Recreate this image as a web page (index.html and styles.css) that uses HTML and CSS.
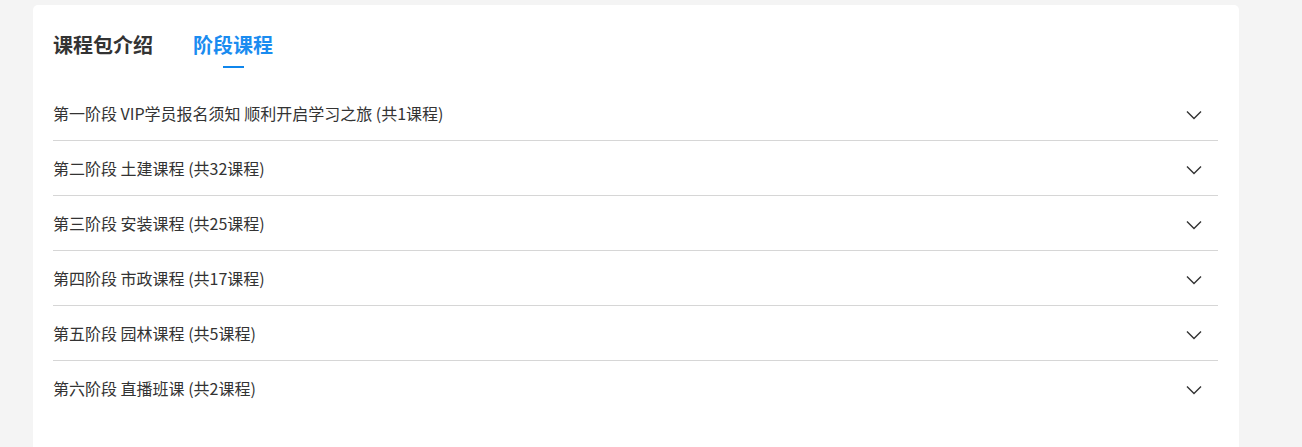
FILE: index.html
```html
<!DOCTYPE html>
<html lang="zh-CN">
<head>
<meta charset="utf-8">
<title>阶段课程</title>
<link rel="stylesheet" href="styles.css">
</head>
<body>
<div class="card">
  <div class="tabs">
    <div class="tab">课程包介绍</div>
    <div class="tab active">阶段课程</div>
  </div>
  <ul class="stages">
    <li class="stage"><span class="stage-title">第一阶段 VIP学员报名须知 顺利开启学习之旅 (共1课程)</span><svg class="chev" viewBox="0 0 16 10" width="16" height="10"><path d="M1 1.5 L8 8.5 L15 1.5" fill="none" stroke="#333" stroke-width="1.4"/></svg></li>
    <li class="stage"><span class="stage-title">第二阶段 土建课程 (共32课程)</span><svg class="chev" viewBox="0 0 16 10" width="16" height="10"><path d="M1 1.5 L8 8.5 L15 1.5" fill="none" stroke="#333" stroke-width="1.4"/></svg></li>
    <li class="stage"><span class="stage-title">第三阶段 安装课程 (共25课程)</span><svg class="chev" viewBox="0 0 16 10" width="16" height="10"><path d="M1 1.5 L8 8.5 L15 1.5" fill="none" stroke="#333" stroke-width="1.4"/></svg></li>
    <li class="stage"><span class="stage-title">第四阶段 市政课程 (共17课程)</span><svg class="chev" viewBox="0 0 16 10" width="16" height="10"><path d="M1 1.5 L8 8.5 L15 1.5" fill="none" stroke="#333" stroke-width="1.4"/></svg></li>
    <li class="stage"><span class="stage-title">第五阶段 园林课程 (共5课程)</span><svg class="chev" viewBox="0 0 16 10" width="16" height="10"><path d="M1 1.5 L8 8.5 L15 1.5" fill="none" stroke="#333" stroke-width="1.4"/></svg></li>
    <li class="stage"><span class="stage-title">第六阶段 直播班课 (共2课程)</span><svg class="chev" viewBox="0 0 16 10" width="16" height="10"><path d="M1 1.5 L8 8.5 L15 1.5" fill="none" stroke="#333" stroke-width="1.4"/></svg></li>
  </ul>
</div>
</body>
</html>
```

FILE: styles.css
```css
html, body {
  margin: 0;
  padding: 0;
  background: #f4f4f4;
  height: 100%;
}
body {
  padding: 5px 0 0 33px;
  box-sizing: border-box;
  font-family: "Noto Sans CJK SC", "Noto Sans", sans-serif;
  color: #333;
  overflow: hidden;
}
.card {
  width: 1206px;
  min-height: 460px;
  background: #fff;
  border-radius: 5px;
  padding: 25px 21px 0 20px;
  box-sizing: border-box;
}
.tabs {
  display: flex;
  gap: 40px;
  height: 56px;
}
.tab {
  font-size: 20px;
  line-height: 30px;
  font-weight: 700;
  color: #333;
  position: relative;
}
.tab.active {
  color: #1a8cf0;
}
.tab.active::after {
  content: "";
  position: absolute;
  left: 50%;
  top: 36px;
  width: 21px;
  height: 2px;
  margin-left: -10px;
  background: #0f86ec;
}
.stages {
  list-style: none;
  margin: 0;
  padding: 0;
}
.stage {
  display: flex;
  align-items: center;
  justify-content: space-between;
  height: 54px;
  border-bottom: 1px solid #d6d6d6;
  font-size: 16px;
  padding-right: 16px;
}
.stage:last-child {
  border-bottom: none;
}
.stage-title {
  line-height: 24px;
}
.chev {
  display: block;
  margin-top: 3px;
}
```
